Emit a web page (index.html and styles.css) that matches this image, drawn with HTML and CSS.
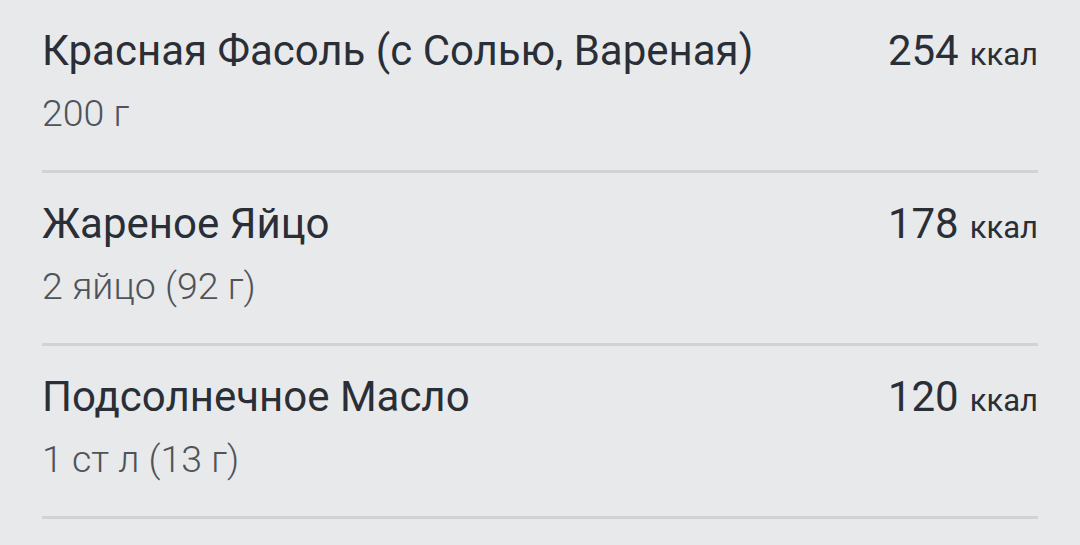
FILE: index.html
```html
<!DOCTYPE html>
<html lang="ru">
<head>
<meta charset="utf-8">
<link rel="stylesheet" href="styles.css">
</head>
<body>
<ul class="list">
  <li class="item">
    <div class="info">
      <div class="name">Красная Фасоль (с Солью, Вареная)</div>
      <div class="portion">200 г</div>
    </div>
    <div class="kcal"><span class="num">254</span><span class="unit">ккал</span></div>
  </li>
  <li class="item">
    <div class="info">
      <div class="name">Жареное Яйцо</div>
      <div class="portion">2 яйцо (92 г)</div>
    </div>
    <div class="kcal"><span class="num">178</span><span class="unit">ккал</span></div>
  </li>
  <li class="item">
    <div class="info">
      <div class="name">Подсолнечное Масло</div>
      <div class="portion">1 ст л (13 г)</div>
    </div>
    <div class="kcal"><span class="num">120</span><span class="unit">ккал</span></div>
  </li>
</ul>
</body>
</html>
```
FILE: styles.css
```css
html, body {
  margin: 0;
  padding: 0;
  background: #e8e9eb;
  font-family: Roboto, "Noto Sans", sans-serif;
}
.list {
  list-style: none;
  margin: 0;
  padding: 0 42px 0 42px;
}
.item {
  display: flex;
  justify-content: space-between;
  align-items: flex-start;
  height: 170px;
  border-bottom: 3px solid #d1d2d6;
  box-sizing: content-box;
}
.info {
  display: flex;
  flex-direction: column;
  padding-top: 26px;
}
.name {
  font-size: 42px;
  line-height: 50px;
  color: #2a2e36;
}
.portion {
  font-size: 37.5px;
  font-weight: 300;
  line-height: 50px;
  margin-top: 12px;
  color: #4f535a;
}
.kcal {
  display: flex;
  align-items: baseline;
  gap: 11px;
  padding-top: 26px;
  line-height: 50px;
  color: #2a2e36;
  white-space: nowrap;
}
.num {
  font-size: 42px;
}
.unit {
  font-size: 31px;
}
```
